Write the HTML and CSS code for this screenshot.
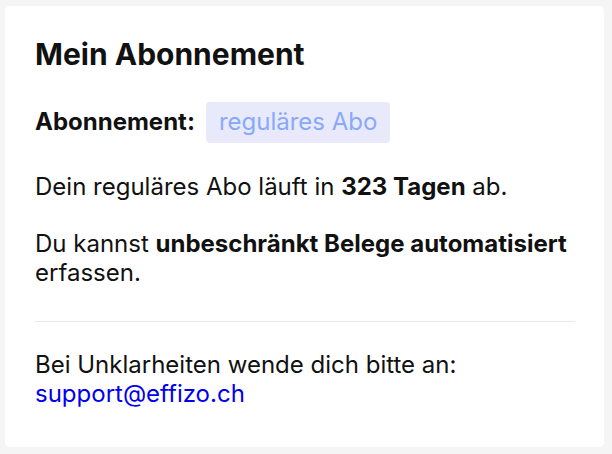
FILE: index.html
```html
<!DOCTYPE html>
<html lang="de">
<head>
  <meta charset="UTF-8" />
  <meta name="viewport" content="width=device-width, initial-scale=1" />
  <title>Mein Abonnement</title>
  <link rel="stylesheet" href="styles.css">
</head>
<body>
  <div class="card">
    <h2>Mein Abonnement</h2>
    <div class="plan-row">
      <span class="label">Abonnement:</span>
      <span class="badge">reguläres Abo</span>
    </div>
    <p>Dein reguläres Abo läuft in <strong>323 Tagen</strong> ab.</p>
    <p class="last">Du kannst <strong>unbeschränkt Belege automatisiert</strong> erfassen.</p>
    <hr />
    <p class="support">Bei Unklarheiten wende dich bitte an:<br /><a href="mailto:support@effizo.ch">support@effizo.ch</a></p>
  </div>
</body>
</html>
```

FILE: styles.css
```css
* { box-sizing: border-box; }
body {
  margin: 0; padding: 6px 8px 7px 5px;
  background: #f5f5f5; color: #111;
  font-family: Inter, 'Noto Sans', sans-serif;
}
.card {
  background: #ffffff; border-radius: 5px;
  padding: 30px 29px 38px 30px;
  font-size: 24px; line-height: 1.2;
}
h2 { margin: 0 0 30px; font-size: 30px; line-height: 1.2; font-weight: 700; }
.plan-row { display: flex; align-items: center; gap: 11px; margin-bottom: 30px; }
.label { font-weight: 700; }
.badge {
  background: #e8eafc; color: #88a9f9;
  border-radius: 4px; padding: 6px 13px;
}
p { margin: 0 0 28.8px; }
p.last { margin: 0; }
strong { font-weight: 700; }
hr { border: none; border-top: 1px solid #e8e8e8; margin: 33px 0 29px; }
.support { margin: 0; }
a { color: #0000ee; text-decoration: none; }
```
